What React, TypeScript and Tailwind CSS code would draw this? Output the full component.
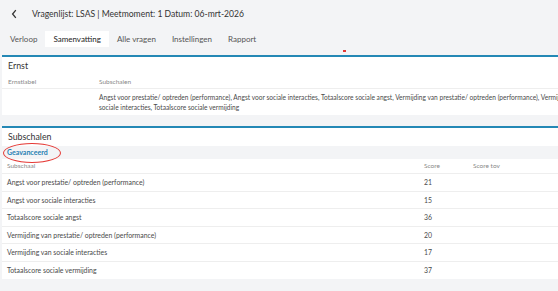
import React from "react";

const tabs = ["Verloop", "Samenvatting", "Alle vragen", "Instellingen", "Rapport"];

const rows = [
  { name: "Angst voor prestatie/ optreden (performance)", score: 21 },
  { name: "Angst voor sociale interacties", score: 15 },
  { name: "Totaalscore sociale angst", score: 36 },
  { name: "Vermijding van prestatie/ optreden (performance)", score: 20 },
  { name: "Vermijding van sociale interacties", score: 17 },
  { name: "Totaalscore sociale vermijding", score: 37 },
];

export default function App() {
  return (
    <div
      className="relative w-[558px] h-[291px] overflow-hidden bg-[#f3f4f6] text-[#333]"
      style={{ fontFamily: "Lato, 'Open Sans', sans-serif" }}
    >
      {/* header */}
      <div className="flex items-center h-[28px] pl-[11px]">
        <svg width="7" height="10" viewBox="0 0 7 10" className="mr-[14px]">
          <path d="M4.8 1.2 L1.6 5 L4.8 8.8" fill="none" stroke="#333" strokeWidth="1.3" />
        </svg>
        <span className="text-[8.6px] text-[#333]">Vragenlijst: LSAS | Meetmoment: 1 Datum: 06-mrt-2026</span>
      </div>

      {/* tabs */}
      <div className="flex items-center h-[16px] mt-[3px] pl-[2px] text-[8px] text-[#555]">
        {tabs.map((t) => (
          <div
            key={t}
            className={
              t === "Samenvatting"
                ? "h-full flex items-center px-[8px] bg-white text-[#222]"
                : "h-full flex items-center px-[8px]"
            }
          >
            {t}
          </div>
        ))}
      </div>
      <div className="absolute left-[343px] top-[50px] w-[3px] h-[2px] bg-[#e53935]" />

      {/* Ernst panel */}
      <div className="ml-[2px] mt-[8px] w-[640px] bg-white border-t-2 border-[#2488b5]">
        <div className="h-[18px] flex items-center pl-[6px] text-[8.8px] text-[#333]">Ernst</div>
        <div className="flex items-center h-[14px] border-b border-[#eee] text-[6.5px] text-[#888]">
          <div className="w-[97px] pl-[6px]">Ernstlabel</div>
          <div>Subschalen</div>
        </div>
        <div className="flex h-[26px] items-center">
          <div className="w-[97px]" />
          <div className="text-[6.6px] leading-[10px] text-[#4a4a4a]">
            <div className="whitespace-nowrap">
              Angst voor prestatie/ optreden (performance), Angst voor sociale interacties, Totaalscore sociale angst, Vermijding van prestatie/ optreden (performance), Vermijding van
            </div>
            <div className="whitespace-nowrap">sociale interacties, Totaalscore sociale vermijding</div>
          </div>
        </div>
      </div>

      {/* Subschalen panel */}
      <div className="relative ml-[2px] mt-[11px] w-[640px] bg-white border-t-2 border-[#2488b5]">
        <div className="h-[18px] flex items-center pl-[6px] text-[8.8px] text-[#333]">Subschalen</div>
        <div className="h-[13px] flex items-center pl-[5px] bg-[#f3f4f6] text-[7px] font-bold text-[#1f7fb2]">
          Geavanceerd
        </div>
        <div className="absolute left-[1px] top-[15px] w-[58px] h-[20px] rounded-[50%] border border-[#e53935]" />
        <div className="flex items-center h-[15px] border-b border-[#eee] text-[6.5px] text-[#888]">
          <div className="w-[422px] pl-[5px]">Subschaal</div>
          <div className="w-[49px]">Score</div>
          <div>Score tov</div>
        </div>
        {rows.map((r, i) => (
          <div
            key={r.name}
            className={
              i < rows.length - 1
                ? "flex items-center h-[17.5px] border-b border-[#eee] text-[6.9px] text-[#4a4a4a]"
                : "flex items-center h-[17.5px] text-[6.9px] text-[#4a4a4a]"
            }
          >
            <div className="w-[422px] pl-[5px]">{r.name}</div>
            <div className="w-[49px]">{r.score}</div>
            <div />
          </div>
        ))}
      </div>
    </div>
  );
}
